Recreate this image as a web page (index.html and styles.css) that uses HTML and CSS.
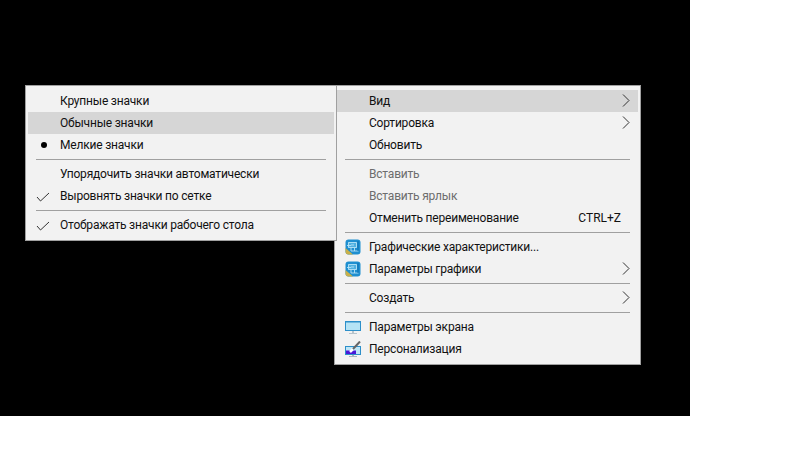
FILE: index.html
```html
<!DOCTYPE html>
<html lang="ru">
<head>
    <meta charset="UTF-8">
    <meta name="viewport" content="width=device-width, initial-scale=1.0">
    <title>Контекстное меню</title>
    <link rel="stylesheet" href="styles.css">
</head>
<body>
    <div class="desktop">
        <!-- Main context menu -->
        <div class="menu menu-main">
            <div class="item active">Вид<svg class="arrow" viewBox="0 0 8 13"><path d="M1 .5 7 6.500 1 12.500"/></svg></div>
            <div class="item">Сортировка<svg class="arrow" viewBox="0 0 8 13"><path d="M1 .5 7 6.500 1 12.500"/></svg></div>
            <div class="item">Обновить</div>
            <div class="sep"></div>
            <div class="item disabled">Вставить</div>
            <div class="item disabled">Вставить ярлык</div>
            <div class="item">Отменить переименование<span class="shortcut">CTRL+Z</span></div>
            <div class="sep"></div>
            <div class="item">
                <svg class="icon" viewBox="0 0 16 16"><rect x="0.500" y="0.500" width="15" height="15" rx="3" fill="#1f8fd0"/><path d="M.5 9v3.500a3 3 0 0 0 3 3H8L.5 9z" fill="#c9b04a"/><path d="M3 3h9v6H3z" fill="#4fb0e0"/><path d="M3.500 3.500h8v5h-8zM6 8.500v3.500h7.500M2 6.500h4M6 6h3M9.500 9v3" fill="none" stroke="#b4e2f6" stroke-width=".9"/><path d="M13 2v10" stroke="#0f6fae"/></svg>
                Графические характеристики...
            </div>
            <div class="item">
                <svg class="icon" viewBox="0 0 16 16"><rect x="0.500" y="0.500" width="15" height="15" rx="3" fill="#1f8fd0"/><path d="M.5 9v3.500a3 3 0 0 0 3 3H8L.5 9z" fill="#c9b04a"/><path d="M3 3h9v6H3z" fill="#4fb0e0"/><path d="M3.500 3.500h8v5h-8zM6 8.500v3.500h7.500M2 6.500h4M6 6h3M9.500 9v3" fill="none" stroke="#b4e2f6" stroke-width=".9"/><path d="M13 2v10" stroke="#0f6fae"/></svg>
                Параметры графики<svg class="arrow" viewBox="0 0 8 13"><path d="M1 .5 7 6.500 1 12.500"/></svg>
            </div>
            <div class="sep"></div>
            <div class="item">Создать<svg class="arrow" viewBox="0 0 8 13"><path d="M1 .5 7 6.500 1 12.500"/></svg></div>
            <div class="sep"></div>
            <div class="item">
                <svg class="icon" viewBox="0 0 16 16"><rect x="0" y="2" width="16" height="10" fill="#2d8fc9"/><rect x="1" y="3.500" width="14" height="7.500" fill="#b5e3f5"/><path d="M7 12h2v2H7z" fill="#b8c4cc"/><path d="M4 14.500h8" stroke="#b8c4cc"/></svg>
                Параметры экрана
            </div>
            <div class="item">
                <svg class="icon" viewBox="0 0 16 16"><rect x="0" y="5" width="16" height="9" fill="#2d8fc9"/><rect x="1" y="6" width="14" height="7" fill="#bfe6f7"/><rect x="1" y="9.500" width="10" height="3.500" fill="#4a16d8"/><path d="M5 11 8 8" stroke="#fff" stroke-width="2.500"/><path d="M8 8 15 .5" stroke="#666" stroke-width="2"/><path d="M7 14h2v1H7zM4 15h8v1H4z" fill="#a9b4bc"/></svg>
                Персонализация
            </div>
        </div>

        <!-- View submenu -->
        <div class="menu menu-sub">
            <div class="item">Крупные значки</div>
            <div class="item active">Обычные значки</div>
            <div class="item"><span class="dot"></span>Мелкие значки</div>
            <div class="sep"></div>
            <div class="item">Упорядочить значки автоматически</div>
            <div class="item"><svg class="check" viewBox="0 0 14 10"><path d="M1 5 4.500 9 13 1"/></svg>Выровнять значки по сетке</div>
            <div class="sep"></div>
            <div class="item"><svg class="check" viewBox="0 0 14 10"><path d="M1 5 4.500 9 13 1"/></svg>Отображать значки рабочего стола</div>
        </div>
    </div>
</body>
</html>
```

FILE: styles.css
```css
html, body {
    margin: 0;
    height: 100%;
    background: white;
}
.desktop {
    position: relative;
    width: 690px;
    height: 416px;
    background: black;
}
.menu {
    position: absolute;
    top: 85px;
    box-sizing: border-box;
    padding: 4px 2px;
    background: #f2f2f2;
    border: 1px solid #a0a0a0;
    font-family: Roboto, sans-serif;
    font-size: 12px;
    letter-spacing: -0.2px;
    color: #111;
}
.menu-main {
    left: 334px;
    width: 307px;
}
.menu-sub {
    left: 25px;
    width: 312px;
}
.item {
    position: relative;
    height: 22px;
    line-height: 22px;
    padding-left: 32px;
    white-space: nowrap;
}
.active {
    background: #d6d6d6;
}
.disabled {
    color: #6d6d6d;
}
.sep {
    height: 1px;
    margin: 3px 8px;
    background: #a0a0a0;
}
.shortcut {
    position: absolute;
    right: 17px;
    letter-spacing: 0;
}
.arrow {
    position: absolute;
    right: 8px;
    top: 4px;
    width: 8px;
    height: 13px;
    fill: none;
    stroke: #333;
}
.icon {
    position: absolute;
    left: 8px;
    top: 3px;
    width: 16px;
    height: 16px;
}
.check {
    position: absolute;
    left: 8px;
    top: 7px;
    width: 14px;
    height: 10px;
    fill: none;
    stroke: #333;
}
.dot {
    position: absolute;
    left: 13px;
    top: 8px;
    width: 6px;
    height: 6px;
    border-radius: 50%;
    background: black;
}
```
